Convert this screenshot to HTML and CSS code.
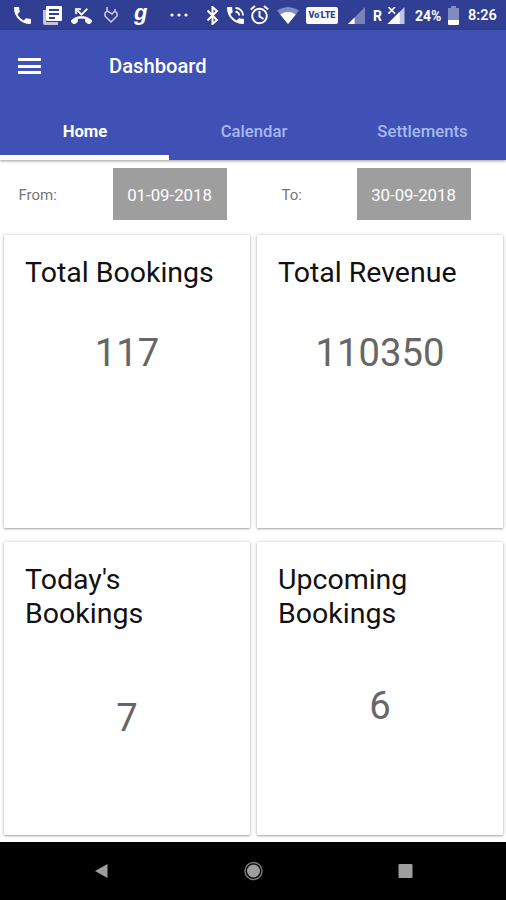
FILE: index.html
```html
<!DOCTYPE html>
<html lang="en">
<head>
<meta charset="utf-8">
<title>Dashboard</title>
<link rel="stylesheet" href="styles.css">
</head>
<body>
<div class="status">
  <svg class="call" viewBox="3 3 18 18"><path d="M6.620 10.790c1.440 2.830 3.760 5.140 6.590 6.590l2.200-2.200c.27-.27.67-.36 1.020-.24 1.120.37 2.330.57 3.570.57.55 0 1 .45 1 1V20c0 .55-.45 1-1 1-9.390 0-17-7.610-17-17 0-.55.45-1 1-1h3.500c.55 0 1 .45 1 1 0 1.250.2 2.450.57 3.570.11.35.03.74-.25 1.020z"/></svg>
  <svg class="news" viewBox="0 0 19 19"><path opacity=".7" d="M0 4h3v12h12v3H2q-2 0-2-2z"/><path fill-rule="evenodd" d="M4 0h14q1 0 1 1v13q0 1-1 1H4q-1 0-1-1V1q0-1 1-1zm2 3v2h10V3zm0 4v2h10V7zm0 4v2h6v-2z"/></svg>
  <svg class="missed" viewBox="0 2 24 18"><path stroke="#fff" stroke-width=".8" d="M6.500 5.500 12 11l7-7-1-1-6 6-4.500-4.500H11V3H5v6h1.500zm17.200 11.200C20.700 13.800 16.500 12 12 12S3.300 13.800.3 16.700a1 1 0 0 0 0 1.400l2.500 2.500a1 1 0 0 0 1.400 0c.8-.7 1.700-1.300 2.600-1.800.4-.2.600-.5.600-.9v-3.100c1.500-.5 3-.8 4.600-.8s3.200.3 4.600.8v3.100c0 .4.200.7.600.9 1 .5 1.900 1.100 2.700 1.800.4.400 1 .4 1.400 0l2.500-2.500a1 1 0 0 0-.1-1.400z"/></svg>
  <svg class="heart" viewBox="0 0 14 18"><path fill="none" stroke="#fff" stroke-width="1.500" opacity=".75" d="M3 1v4L1 7v3l6 6 6-6V7l-2-2-3 3-3-2-2-1M8 8l3-3V3"/></svg>
  <span class="g">g</span>
  <svg class="dots" viewBox="0 0 18 4"><circle cx="2" cy="2" r="1.600"/><circle cx="9" cy="2" r="1.600"/><circle cx="16" cy="2" r="1.600"/></svg>
  <svg class="bluetooth" viewBox="0 0 13 19"><path fill="none" stroke="#fff" stroke-width="2" d="M1.500 4.500 11 14l-4.500 4V1L11 5l-9.500 9.500"/></svg>
  <svg class="talk" viewBox="3 3 18 18"><path d="M20 15.500c-1.250 0-2.450-.2-3.570-.57-.35-.11-.74-.03-1.020.24l-2.200 2.200c-2.830-1.440-5.150-3.750-6.590-6.590l2.200-2.200c.28-.28.36-.67.25-1.020C8.700 6.450 8.500 5.250 8.500 4c0-.55-.45-1-1-1H4c-.55 0-1 .45-1 1 0 9.390 7.610 17 17 17 .55 0 1-.45 1-1v-3.500c0-.55-.45-1-1-1z"/><path fill="none" stroke="#fff" stroke-width="2" d="M12 4a8 8 0 0 1 8 8M12 8a4 4 0 0 1 4 4"/></svg>
  <svg class="alarm" viewBox="0 0 19 20"><g fill="none" stroke="#fff" stroke-width="2"><circle cx="9.500" cy="11" r="7.300"/><path d="M.8 4.500 5 1M18.200 4.500 14 1M9.500 6v5.500l4 2.500"/></g></svg>
  <svg class="wifi" viewBox="0 0 22 17"><path opacity=".4" d="M0 3.500Q11-3.500 22 3.500L11 17z"/><path d="M3.200 7.500Q11 2 18.800 7.500L11 17z"/></svg>
  <span class="volte">Vo<sup>&#8210;</sup>LTE</span>
  <svg class="signal" viewBox="0 0 18 18"><path opacity=".35" d="M18 0v18H0z"/><path d="M7 11v7H0z"/></svg>
  <span class="roam">R</span>
  <svg class="signal nosim" viewBox="0 0 18 18"><path opacity=".7" d="M18 0v18H0z"/><path d="M13 5v13H0z"/><path fill="none" stroke="#303f93" stroke-width="4" d="m0 0 8 7M8 0 0 7"/><path fill="none" stroke="#fff" stroke-width="1.700" d="m1 0 7 7M8 0 1 7"/></svg>
  <span class="percent">24%</span>
  <svg class="battery" viewBox="0 0 11 19"><path opacity=".4" d="M3 0h5v2h3v12H0V2h3z"/><path d="M0 14h11v4q0 1-1 1H1q-1 0-1-1z"/></svg>
  <span class="clock">8:26</span>
</div>
<header>
  <div class="toolbar">
    <div class="menu"><i></i><i></i><i></i></div>
    <h1>Dashboard</h1>
  </div>
  <nav class="tabs"><a class="active">Home</a><a>Calendar</a><a>Settlements</a></nav>
</header>
<main>
  <div class="dates">
    <label class="from">From:</label><button>01-09-2018</button>
    <label class="to">To:</label><button>30-09-2018</button>
  </div>
  <div class="cards">
    <section><h2>Total Bookings</h2><p>117</p></section>
    <section><h2>Total Revenue</h2><p>110350</p></section>
    <section class="today"><h2>Today's Bookings</h2><p>7</p></section>
    <section class="upcoming"><h2>Upcoming Bookings</h2><p>6</p></section>
  </div>
</main>
<footer>
  <svg viewBox="0 0 20 20"><path d="M16.500 3v14L4 10z"/></svg>
  <svg viewBox="0 0 20 20"><circle cx="10.500" cy="10" r="6.500"/><circle cx="10.500" cy="10" r="8.500" fill="none" stroke="#777" stroke-width="1.500"/></svg>
  <svg viewBox="0 0 20 20"><rect x="3.500" y="3" width="14" height="14" rx="1"/></svg>
</footer>
</body>
</html>
```
FILE: styles.css
```css
* { box-sizing: border-box; }
body {
  margin: 0;
  height: 900px;
  display: flex;
  flex-direction: column;
  overflow: hidden;
  background: #fff;
  font-family: Roboto, sans-serif;
}
.status {
  height: 30px;
  display: flex;
  align-items: center;
  background: #303f93;
  color: #fff;
  font-size: 14px;
  font-weight: 500;
  line-height: 18px;
}
.status > * { flex: none; white-space: nowrap; }
.status svg { fill: #fff; }
.call { width: 17px; height: 17px; margin-left: 14px; }
.news { width: 19px; height: 19px; margin-left: 12px; }
.missed { width: 21px; height: 17px; margin-left: 9px; }
.heart { width: 14px; height: 18px; margin-left: 12px; }
.g {
  width: 14px;
  margin-left: 16px;
  padding-bottom: 4px;
  font-family: "Liberation Sans", sans-serif;
  font-size: 22px;
  font-style: italic;
  font-weight: 700;
  line-height: 24px;
}
.dots { width: 18px; height: 4px; margin-left: 22px; }
.bluetooth { width: 13px; height: 19px; margin-left: 18px; }
.talk { width: 17px; height: 17px; margin-left: 8px; }
.alarm { width: 19px; height: 20px; margin-left: 6px; }
.wifi { width: 22px; height: 17px; margin-left: 8px; }
.volte {
  width: 32px;
  height: 17px;
  margin-left: 7px;
  border-radius: 2px;
  background: #fff;
  color: #303f93;
  text-align: center;
  font-size: 9px;
  font-weight: 900;
  line-height: 17px;
}
.volte sup { font-size: 6px; line-height: 0; margin: 0 -1px; }
.signal { width: 17px; height: 17px; margin-left: 10px; }
.roam { width: 9px; margin-left: 8px; padding-top: 2px; font-weight: 700; }
.nosim { width: 18px; margin-left: 5px; }
.percent { width: 28px; margin-left: 10px; padding-top: 2px; font-weight: 700; }
.battery { width: 11px; height: 19px; margin-left: 5px; }
.clock { margin-left: 9px; padding-top: 2px; font-size: 14.500px; font-weight: 600; }
header {
  height: 130px;
  background: #3f51b5;
  color: #fff;
  box-shadow: 0 1px 3px rgba(0, 0, 0, .4);
  display: flex;
  flex-direction: column;
  z-index: 1;
}
.toolbar { height: 72px; display: flex; align-items: center; padding-left: 18px; }
.menu { width: 23px; display: grid; gap: 3.500px; }
.menu i { height: 3px; background: #fff; }
h1 { margin: 0 0 0 68px; font-size: 20.200px; font-weight: 500; line-height: 24px; }
.tabs { flex: 1; display: grid; grid-template-columns: 169px 169px 168px; }
.tabs a {
  height: 58px;
  padding-left: 1px;
  text-align: center;
  font-size: 16.700px;
  font-weight: 500;
  line-height: 59px;
  color: #a7b8f0;
}
.tabs .active { color: #fff; font-weight: 700; border-bottom: 5px solid #fff; }
main { height: 682px; }
.dates { height: 75px; padding-top: 8px; display: flex; }
.dates label { color: #777; font-size: 15px; font-weight: 400; line-height: 55px; }
.from { width: 94px; margin-left: 18.500px; }
.to { width: 75px; margin-left: 55px; }
.dates button {
  width: 114px;
  height: 52px;
  padding: 2px 0 0;
  border: 0;
  background: #9e9e9e;
  color: #fff;
  font: 400 16.800px Roboto, sans-serif;
}
.cards {
  padding: 0 3px 0 4px;
  display: grid;
  grid-template-columns: 246px 246px;
  grid-auto-rows: 293px;
  gap: 14px 7px;
}
.cards section {
  padding: 21px 20px;
  border-radius: 1px;
  background: #fff;
  box-shadow: 0 1px 2px rgba(0, 0, 0, .28), 0 0 4px rgba(0, 0, 0, .18);
}
h2 { margin: 0 0 0 1px; color: #111; font-size: 28.500px; font-weight: 400; line-height: 34px; }
.cards p {
  margin: 38px 0 0;
  color: #666;
  font-size: 38.200px;
  line-height: 50px;
  text-align: center;
}
.today p { margin-top: 62px; }
.upcoming p { margin-top: 50px; }
footer {
  height: 58px;
  background: #000;
  display: grid;
  grid-template-columns: 202px 102px 202px;
  align-items: center;
  justify-items: center;
  z-index: 1;
}
footer svg { width: 20px; height: 20px; fill: #9e9e9e; }
```
